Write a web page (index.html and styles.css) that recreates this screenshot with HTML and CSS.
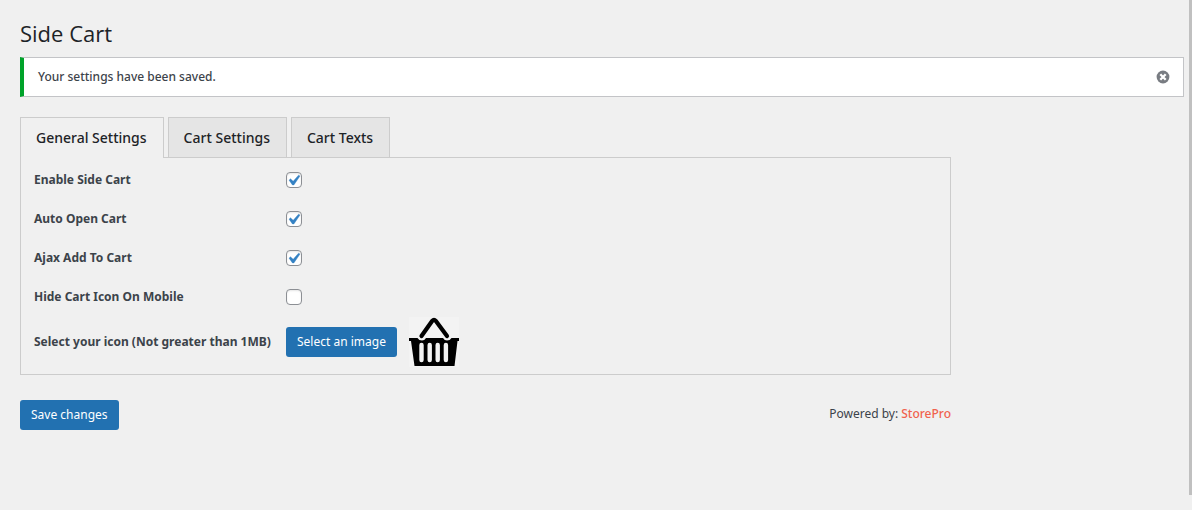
FILE: index.html
```html
<!DOCTYPE html>
<html lang="en">
<head>
<meta charset="utf-8">
<title>Side Cart</title>
<link rel="stylesheet" href="styles.css">
</head>
<body>
<div class="scroll-edge"></div>
<main class="wrap">
  <h1 class="page-title">Side Cart</h1>
  <div class="notice" role="status">
    <p class="notice-text">Your settings have been saved.</p>
    <button class="notice-dismiss" type="button" aria-label="Dismiss this notice">
      <svg viewBox="0 0 14 14" width="14" height="14" aria-hidden="true"><circle cx="7" cy="7" r="6.4" fill="#787c82"/><path d="M4.300 4.300l5.400 5.400M9.700 4.300l-5.400 5.400" stroke="#fff" stroke-width="2.300"/></svg>
    </button>
  </div>
  <form class="settings">
    <nav class="tabs" aria-label="Settings sections">
      <a class="tab tab-active" href="#general">General Settings</a>
      <a class="tab" href="#cart">Cart Settings</a>
      <a class="tab" href="#texts">Cart Texts</a>
    </nav>
    <section class="panel" id="general">
      <div class="row"><label class="label" for="enable">Enable Side Cart</label><input class="check" id="enable" type="checkbox" checked></div>
      <div class="row"><label class="label" for="auto">Auto Open Cart</label><input class="check" id="auto" type="checkbox" checked></div>
      <div class="row"><label class="label" for="ajax">Ajax Add To Cart</label><input class="check" id="ajax" type="checkbox" checked></div>
      <div class="row"><label class="label" for="hide">Hide Cart Icon On Mobile</label><input class="check" id="hide" type="checkbox"></div>
      <div class="row row-icon">
        <label class="label" for="pick">Select your icon (Not greater than 1MB)</label>
        <div class="picker">
          <button class="button" id="pick" type="button">Select an image</button>
          <svg class="basket" viewBox="0 0 50 50" width="50" height="50" role="img" aria-label="Basket icon">
            <rect width="50" height="50" fill="#f3f3f3"/>
            <path d="M12.500 19L23.300 3.800Q25 1.800 26.700 3.800L38 19" fill="none" stroke="#000" stroke-width="4.200" stroke-linecap="round" stroke-linejoin="round"/>
            <path d="M0 21h8.500Q10 23.500 13 23.500Q15.500 23.500 17 21H34Q35.500 23.500 38 23.500Q41 23.500 42.500 21H50V24H48.500L45.500 49H5.500L2 24H0z" fill="#000"/>
            <path d="M12.500 28V43M20.700 28V43M28.700 28V43M36.900 28V43" stroke="#f3f3f3" stroke-width="4.400" stroke-linecap="round"/>
          </svg>
        </div>
      </div>
    </section>
    <footer class="footer">
      <button class="button" type="submit">Save changes</button>
      <p class="credit">Powered by: <a class="credit-link" href="#storepro">StorePro</a></p>
    </footer>
  </form>
</main>
</body>
</html>
```
FILE: styles.css
```css
* {
  box-sizing: border-box;
}

body {
  margin: 0;
  background: #f0f0f0;
  color: #3c434a;
  font: 12px/20px "Noto Sans", "Open Sans", sans-serif;
}

/* Scroll indicator over the right edge of the window */
.scroll-edge {
  position: fixed;
  top: 0;
  right: 0;
  bottom: 15px;
  width: 3px;
  background: #c0c0c0;
}

.wrap {
  padding: 18px 8px 20px 20px;
}

.page-title {
  margin: 0 0 9px;
  color: #1d2327;
  font-family: "Open Sans", "Noto Sans", sans-serif;
  font-size: 22px;
  font-weight: 400;
  line-height: 30px;
}

.notice {
  display: flex;
  align-items: center;
  justify-content: space-between;
  height: 40px;
  padding: 0 13px 0 14px;
  border: 1px solid #c3c4c7;
  border-left: 4px solid #00a32a;
  background: #fff;
}

.notice-text {
  margin: 0;
  font-weight: 500;
}

.notice-dismiss {
  display: flex;
  padding: 0;
  border: 0;
  background: none;
}

.settings {
  width: 80%;
  max-width: 931px;
  margin-top: 20px;
}

.tabs {
  display: flex;
  gap: 4px;
}

.tab {
  padding: 8px 16px 7px 15px;
  border: 1px solid #ccc;
  border-bottom: 0;
  background: #e5e5e5;
  color: #1d2327;
  font-size: 14px;
  line-height: 24px;
  font-weight: 500;
  text-decoration: none;
}

.tab-active {
  z-index: 1;
  margin-bottom: -1px;
  background: #f0f0f0;
}

.panel {
  padding: 2px 13px 6px;
  border: 1px solid #ccc;
}

.row {
  display: grid;
  grid-template-columns: 252px 1fr;
  align-items: center;
  min-height: 39px;
}

.row-icon {
  min-height: 52px;
}

.label {
  font-weight: 700;
  white-space: nowrap;
}

.check {
  appearance: none;
  width: 16px;
  height: 16px;
  margin: 0;
  border: 1px solid #8c8f94;
  border-radius: 4px;
  background: #fff;
  box-shadow: inset 0 1px 2px rgba(0, 0, 0, 0.1);
}

.check:checked {
  background: #fff url("data:image/svg+xml,%3Csvg xmlns='http://www.w3.org/2000/svg' viewBox='0 0 20 20'%3E%3Cpath d='M14.83 4.89l1.34.94-5.81 8.38H9.02L5.78 9.67l1.34-1.25 2.57 2.4z' fill='%233582c4' stroke='%233582c4' stroke-width='.4'/%3E%3C/svg%3E") -4px -3px / 21px 21px no-repeat;
}

.picker {
  display: flex;
  align-items: center;
  gap: 12px;
}

.button {
  height: 30px;
  padding: 0 11px;
  border: 0;
  border-radius: 3px;
  background: #2271b1;
  color: #fff;
  font: inherit;
}

.footer {
  display: flex;
  align-items: flex-start;
  justify-content: space-between;
  margin-top: 25px;
}

.credit {
  margin: 4px 0 0;
}

.credit-link {
  color: #f0624d;
  font-weight: 500;
  text-decoration: none;
}
```
